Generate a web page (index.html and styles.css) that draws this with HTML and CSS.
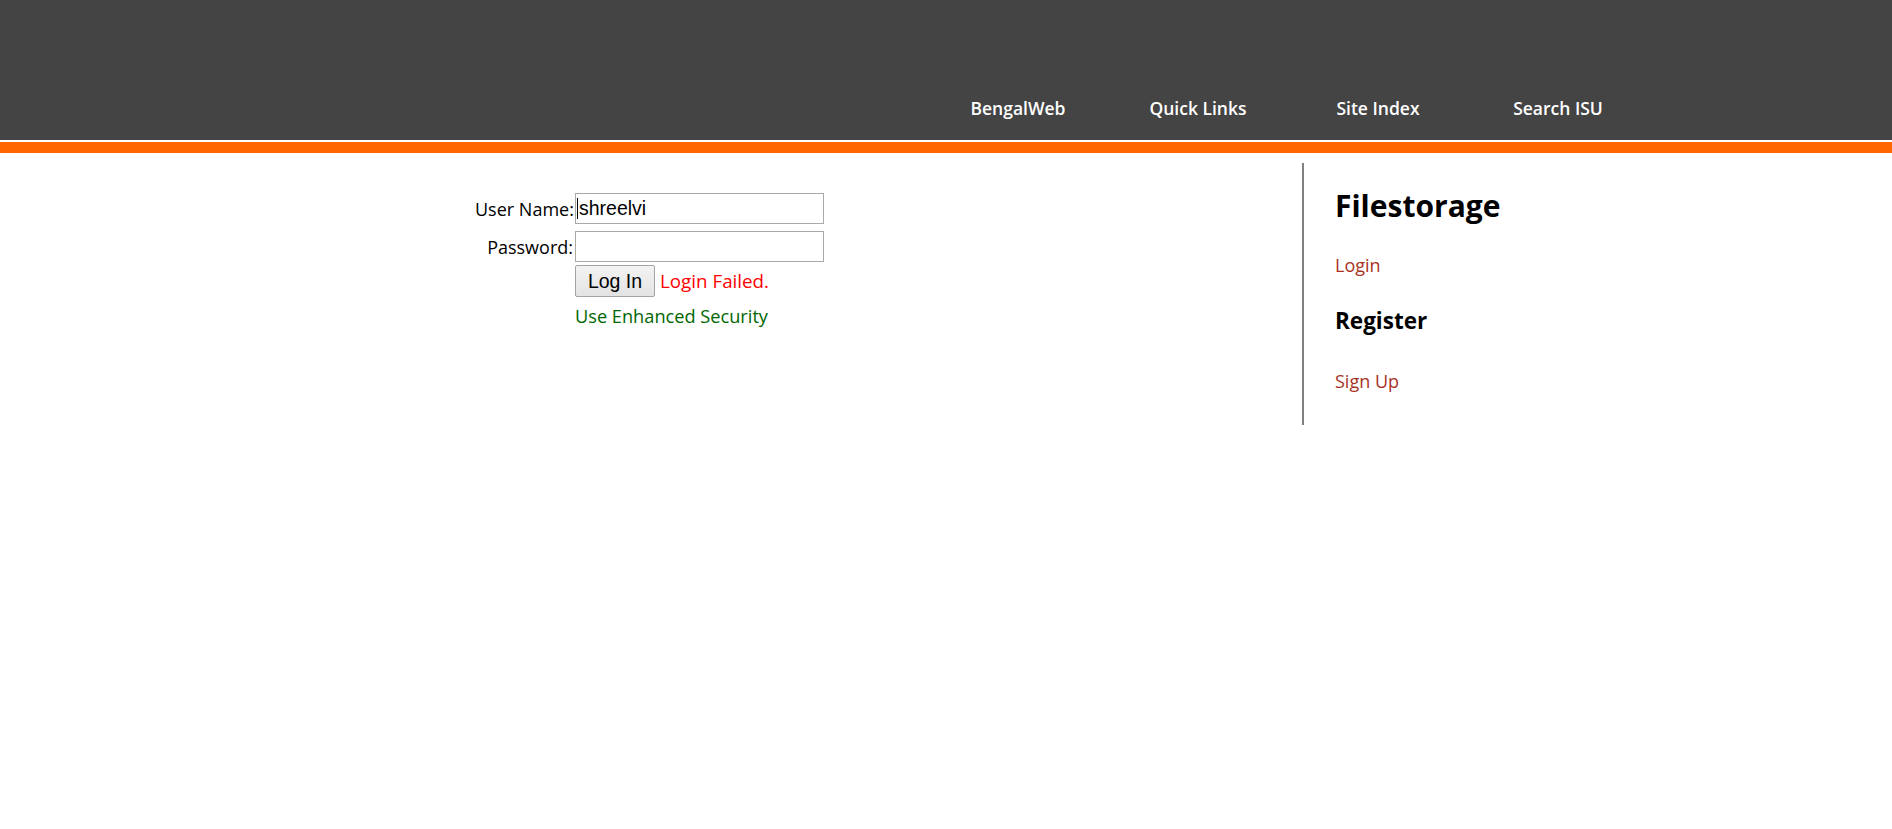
FILE: index.html
```html
<!DOCTYPE html>
<html lang="en">
<head>
<meta charset="utf-8">
<title>Filestorage - Login</title>
<link rel="stylesheet" href="styles.css">
</head>
<body>
<header class="header">
  <nav class="nav">
    <a class="nav-item" href="#">BengalWeb</a>
    <a class="nav-item" href="#">Quick Links</a>
    <a class="nav-item" href="#">Site Index</a>
    <a class="nav-item" href="#">Search ISU</a>
  </nav>
</header>
<div class="stripe"></div>
<div class="page">
  <main class="main">
    <form class="login-form">
      <label class="label" for="user">User Name:</label>
      <div class="field-wrap"><span class="caret"></span><input class="field" id="user" type="text" value="shreelvi"></div>
      <label class="label" for="pass">Password:</label>
      <div class="field-wrap"><input class="field" id="pass" type="password"></div>
      <div></div>
      <div class="actions">
        <button class="btn" type="button">Log In</button>
        <span class="error">Login Failed.</span>
      </div>
      <div></div>
      <a class="secure" href="#">Use Enhanced Security</a>
    </form>
  </main>
  <aside class="sidebar">
    <h2 class="side-title">Filestorage</h2>
    <a class="side-link" href="#">Login</a>
    <h3 class="side-sub">Register</h3>
    <a class="side-link side-link-last" href="#">Sign Up</a>
  </aside>
</div>
</body>
</html>
```

FILE: styles.css
```css
html, body {
  margin: 0;
  padding: 0;
  background: #ffffff;
}

body {
  font-family: "Open Sans", "Liberation Sans", sans-serif;
  font-size: 18px;
  color: #000;
}

.header {
  box-sizing: border-box;
  height: 140px;
  background: #444444;
  padding-top: 98px;
}

.nav {
  display: flex;
  margin-left: 928px;
}

.nav-item {
  width: 180px;
  text-align: center;
  color: #ffffff;
  text-decoration: none;
  font-weight: 600;
  font-size: 17.5px;
  line-height: 20px;
}

.stripe {
  height: 11px;
  margin-top: 2px;
  background: #ff6600;
}

.page {
  display: flex;
  align-items: flex-start;
}

.main {
  width: 1302px;
  flex: none;
}

.login-form {
  display: grid;
  grid-template-columns: 100px 249px;
  row-gap: 7px;
  align-items: center;
  padding-left: 475px;
  padding-top: 40px;
}

.label {
  text-align: right;
  padding-right: 2px;
  line-height: 22px;
  white-space: nowrap;
}

.field-wrap {
  position: relative;
  display: flex;
}

.caret {
  position: absolute;
  left: 2px;
  top: 5px;
  width: 1px;
  height: 21px;
  background: #000;
}

.field {
  box-sizing: border-box;
  width: 249px;
  height: 31px;
  margin: 0;
  padding: 0 3px;
  border: 1px solid #a9a9a9;
  font-family: "Liberation Sans", Arial, sans-serif;
  font-size: 19.5px;
  color: #000;
  background: #fff;
  outline: none;
}

.actions {
  display: flex;
  align-items: center;
  gap: 5px;
  margin-top: -4px;
  white-space: nowrap;
}

.btn {
  box-sizing: border-box;
  width: 80px;
  height: 32px;
  margin: 0;
  padding: 0;
  border: 1px solid #a3a3a3;
  border-radius: 2px;
  background: linear-gradient(#f3f3f3, #e3e3e3);
  font-family: "Liberation Sans", Arial, sans-serif;
  font-size: 19.5px;
  color: #000;
}

.error {
  color: #ff0000;
  font-size: 18.8px;
  line-height: 22px;
}

.secure {
  color: #006600;
  text-decoration: none;
  font-size: 18.2px;
  line-height: 22px;
  margin-top: 1px;
  white-space: nowrap;
}

.sidebar {
  box-sizing: border-box;
  margin-top: 10px;
  height: 262px;
  border-left: 2px solid #808080;
  padding-left: 31px;
  padding-top: 25px;
  display: flex;
  flex-direction: column;
  align-items: flex-start;
}

.side-title {
  margin: 0;
  font-size: 30px;
  line-height: 36px;
  font-weight: 700;
}

.side-link {
  color: #a8321e;
  text-decoration: none;
  line-height: 22px;
  margin-top: 30px;
}

.side-sub {
  margin: 31px 0 0;
  font-size: 22.5px;
  line-height: 28px;
  font-weight: 700;
}

.side-link-last {
  margin-top: 35px;
}
```
